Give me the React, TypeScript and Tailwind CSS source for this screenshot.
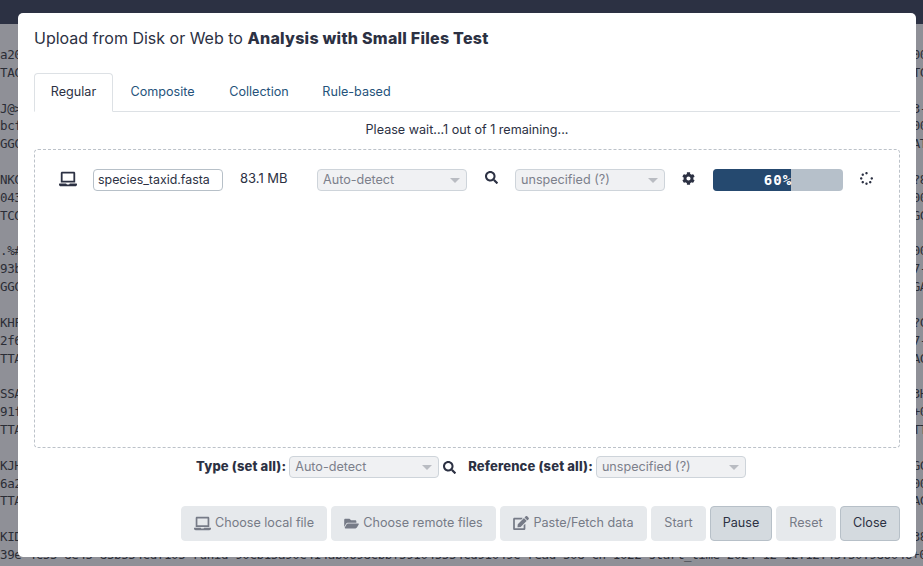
import { FaLaptop, FaFolderOpen, FaEdit, FaSearch, FaCog, FaSpinner } from "react-icons/fa";

const rows: [string, string][] = [
  ["a20", "00"], ["TAC", "TC"], ["", ""],
  ["J@>", "3-"], ["bcf", "00"], ["GGC", "AT"], ["", ""],
  ["NKC", "?8"], ["043", "00"], ["TCG", "GC"], ["", ""],
  [".%#", "00"], ["93b", "7-"], ["GGC", "GA"], ["", ""],
  ["KHF", "?C"], ["2f6", "7-"], ["TTA", "AC"], ["", ""],
  ["SSA", "3H"], ["91f", "+0"], ["TTA", "TT"], ["", ""],
  ["KJH", "GC"], ["6a2", "00"], ["TTA", "AC"], ["", ""],
  ["KID", "38"],
];

function Select({ label, w }: { label: string; w: string }) {
  return (
    <div className={`${w} h-[22px] flex items-center justify-between rounded-[4px] border border-[#ced4da] bg-[#f0f1f3] pl-[5px] pr-[6px] text-[12.6px] text-[#7c808b]`}>
      <span>{label}</span>
      <span className="w-0 h-0 border-x-[5px] border-x-transparent border-t-[5px] border-t-[#b9bcc2]" />
    </div>
  );
}

function Btn({ children, active, w }: { children: React.ReactNode; active?: boolean; w: string }) {
  return (
    <div className={`${w} h-[35px] flex items-center justify-center gap-[4px] rounded-[4px] text-[12.6px] pb-[1px] border ${active ? "bg-[#d4dadf] border-[#b7c0c8] text-[#2c3143]" : "bg-[#e6e9ec] border-[#e6e9ec] text-[#767b87]"}`}>
      {children}
    </div>
  );
}

export default function App() {
  return (
    <div className="relative w-[923px] h-[566px] overflow-hidden bg-[#8f9097] font-['Inter',sans-serif] text-[#2c3143]">
      <div className="h-[24px] bg-[#2c3143]" />
      <div className="pt-[22px] font-['DejaVu_Sans_Mono',monospace] text-[12.5px] tracking-[-0.4px] leading-[17.86px] text-[#2b2d36]">
        {rows.map(([l, r], i) => (
          <div key={i} className="h-[17.86px] flex justify-between -mr-[4px]">
            <span>{l}</span>
            <span>{r}</span>
          </div>
        ))}
        <div className="h-[17.86px] whitespace-nowrap overflow-hidden">
          39e-4c55-8e45-85b554cdf105 runid=90cb15a90c414ab0698cbbf591045554cd91049c read=508 ch=1022 start_time=2024-12-12T12:45:50.986046+0
        </div>
      </div>

      <div className="absolute left-[18px] top-[13px] w-[898px] h-[544px] rounded-[5px] bg-white px-[16px] flex flex-col">
        <h1 className="mt-[15px] h-[20px] text-[16px] leading-[20px] whitespace-nowrap">
          Upload from Disk or Web to <b className="font-extrabold tracking-[0.25px]">Analysis with Small Files Test</b>
        </h1>

        <div className="mt-[25px] h-[39px] flex border-b border-[#dde1e5] text-[12.6px] text-[#25537b]">
          <div className="w-[79px] h-[39px] flex items-center justify-center pb-[1px] rounded-t-[4px] border border-[#dde1e5] border-b-white bg-white text-[#2c3143]">Regular</div>
          <div className="w-[99px] flex items-center justify-center">Composite</div>
          <div className="w-[94px] flex items-center justify-center">Collection</div>
          <div className="w-[101px] flex items-center justify-center">Rule-based</div>
        </div>

        <div className="mt-[9px] h-[17px] text-center text-[12.6px] leading-[17px]">Please wait...1 out of 1 remaining...</div>

        <div className="mt-[11px] h-[299px] rounded-[4px] border border-dashed border-[#bcc2c9] pt-[19px] pl-[24px]">
          <div className="flex items-center h-[22px]">
            <FaLaptop className="w-[18px] h-[16px] -mt-[3px] text-[#2c3143]" />
            <div className="ml-[16px] w-[130px] h-[22px] flex items-center rounded-[4px] border border-[#b7c0c8] px-[4px] pt-[1px] text-[12.4px] text-[#2c3143] whitespace-nowrap">species_taxid.fasta</div>
            <div className="ml-[17px] w-[77px] text-[13px] -mt-[3px]">83.1 MB</div>
            <Select label="Auto-detect" w="w-[150px]" />
            <FaSearch className="ml-[18px] w-[13px] h-[13px] -mt-[5px] text-[#2c3143]" />
            <div className="ml-[17px]"><Select label="unspecified (?)" w="w-[150px]" /></div>
            <FaCog className="ml-[17px] w-[13px] h-[13px] -mt-[3px] text-[#2c3143]" />
            <div className="relative ml-[18px] w-[130px] h-[22px] rounded-[4px] overflow-hidden bg-[#b6c0ca] text-white">
              <div className="h-full w-[78px] bg-[#25496f]" />
              <div className="absolute inset-0 flex items-center justify-center font-['DejaVu_Sans_Mono',monospace] font-bold tracking-[1px] text-[14px]">60%</div>
            </div>
            <FaSpinner className="ml-[17px] w-[13px] h-[13px] -mt-[3px] text-[#2c3143]" />
          </div>
        </div>

        <div className="mt-[8px] h-[22px] pl-[8px] flex items-center justify-center text-[13px]">
          <b className="font-extrabold tracking-[0.15px] mr-[3px]">Type (set all):</b>
          <Select label="Auto-detect" w="w-[150px]" />
          <FaSearch className="ml-[4px] w-[13px] h-[13px] text-[#2c3143]" />
          <b className="font-extrabold tracking-[0.15px] ml-[12px] mr-[3px]">Reference (set all):</b>
          <Select label="unspecified (?)" w="w-[150px]" />
        </div>

        <div className="mt-[28px] flex justify-end gap-[4px]">
          <Btn w="w-[146px]"><FaLaptop className="w-[17px] h-[15px]" />Choose local file</Btn>
          <Btn w="w-[165px]"><FaFolderOpen className="w-[15px] h-[13px]" />Choose remote files</Btn>
          <Btn w="w-[147px]"><FaEdit className="w-[16px] h-[14px]" />Paste/Fetch data</Btn>
          <Btn w="w-[55px]">Start</Btn>
          <Btn w="w-[62px]" active>Pause</Btn>
          <Btn w="w-[60px]">Reset</Btn>
          <Btn w="w-[60px]" active>Close</Btn>
        </div>
      </div>
    </div>
  );
}
